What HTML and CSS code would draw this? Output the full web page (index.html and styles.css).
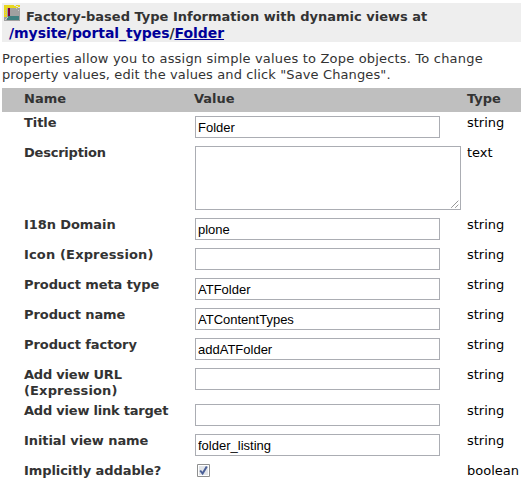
FILE: index.html
```html
<!DOCTYPE html>
<html lang="en">
<head>
<meta charset="utf-8">
<title>Properties</title>
<link rel="stylesheet" href="styles.css">
</head>
<body>
<header class="bar">
  <div class="bar-line">
    <svg class="type-icon" width="16" height="16" viewBox="0 0 16 16" shape-rendering="crispEdges">
      <path fill="#a0a0a0" d="M3 3h13v13H0v-4h3z"/>
      <path fill="#e8d820" d="M0 0h16v3H3v9H0z"/>
      <path fill="#c8c090" d="M1 5h1v1H1zM1 7h1v1H1zM1 9h1v1H1z"/>
      <path fill="#e4e4e4" d="M10 0h2v1h-2zM12 1h2v1h-2zM14 2h2v1h-2z"/>
      <path fill="#c8c8c8" d="M3 12l-2 2v1h1l2-3zM12 3h1v1h-1zM14 5h1v1h-1z"/>
      <path fill="#800040" d="M4 3h2v8H4z"/>
      <path fill="#408080" d="M4 11h11v4H3v-2h1z"/>
    </svg>
    <span class="bar-title">Factory-based Type Information with dynamic views at</span>
  </div>
  <div class="path"><a>/mysite</a>/<a>portal_types</a>/<a class="current">Folder</a></div>
</header>
<p class="help"><span class="help-a">Properties allow you to assign simple values to Zope objects. To change</span><br><span class="help-b">property values, edit the values and click "Save Changes".</span></p>
<form class="props">
  <div class="row head"><div>Name</div><div class="value">Value</div><div>Type</div></div>
  <div class="row"><label>Title</label><input class="field" type="text" value="Folder"><span>string</span></div>
  <div class="row tall"><label class="tight">Description</label><div class="area"><textarea></textarea><svg class="grip" width="8" height="8" viewBox="0 0 8 8"><path d="M0.5 7.5L7.5 0.5M4.5 7.5L7.5 4.5" stroke="#555" stroke-dasharray="1 .4"/></svg></div><span>text</span></div>
  <div class="row"><label>I18n Domain</label><input class="field" type="text" value="plone"><span>string</span></div>
  <div class="row"><label class="wide">Icon (Expression)</label><input class="field" type="text"><span>string</span></div>
  <div class="row"><label>Product meta type</label><input class="field" type="text" value="ATFolder"><span>string</span></div>
  <div class="row"><label>Product name</label><input class="field" type="text" value="ATContentTypes"><span>string</span></div>
  <div class="row"><label>Product factory</label><input class="field" type="text" value="addATFolder"><span>string</span></div>
  <div class="row double"><label class="tight">Add view URL<br><b class="wide">(Expression)</b></label><input class="field" type="text"><span>string</span></div>
  <div class="row"><label class="tight">Add view link target</label><input class="field" type="text"><span>string</span></div>
  <div class="row"><label>Initial view name</label><input class="field" type="text" value="folder_listing"><span>string</span></div>
  <div class="row last"><label>Implicitly addable?</label><div class="check"><svg width="13" height="13" viewBox="0 0 13 13"><path fill="#fff" stroke="#8e8f8f" d="M.5.5h12v12H.5z"/><path fill="#e2e5e9" d="M2 2h9v9H2z"/><path fill="none" stroke="#4a5f97" stroke-width="2" d="M3.2 6.5L5.6 9.5L9.8 2.5"/></svg></div><span>boolean</span></div>
</form>
</body>
</html>
```
FILE: styles.css
```css
* { box-sizing: border-box; }
body {
  margin: 0;
  padding: 3px 3px 0 2px;
  height: 484px;
  overflow: hidden;
  background: #fff;
  color: #333;
  font: 13px/16px Verdana, "DejaVu Sans", sans-serif;
}
.bar {
  height: 39px;
  padding: 2px 0 0 2px;
  background: #eee;
  font-weight: bold;
}
.bar-line { display: flex; gap: 6px; height: 20px; }
.type-icon { flex: none; }
.bar-title { padding-top: 4px; white-space: nowrap; }
.path { padding-left: 5px; font-size: 14px; letter-spacing: -.05px; }
.path a { color: #009; }
.current { text-decoration: underline; }
.help { margin: 9px 0 5px; height: 32px; white-space: nowrap; }
.help-a { letter-spacing: .19px; }
.help-b { letter-spacing: .12px; }
.row {
  display: grid;
  grid-template-columns: 171px 272px 1fr;
  align-items: start;
  height: 30px;
  padding: 1px 0 0 22px;
}
.head {
  height: 24px;
  margin-bottom: 2px;
  padding-top: 3px;
  background: #bfbfbf;
  font-weight: bold;
}
.value { margin-left: -1px; }
label { font-weight: bold; letter-spacing: -.08px; white-space: nowrap; }
.tight { letter-spacing: -.22px; }
.wide { letter-spacing: .15px; }
.row span { color: #000; }
.tall { height: 72px; }
.double { height: 36px; }
.last { height: 20px; }
.field, textarea {
  display: block;
  margin: 1px 0 0;
  border: 1px solid #abadb3;
  border-radius: 0;
  background: #fff;
  color: #000;
  font: 13px "Liberation Sans", Arial, sans-serif;
}
.field { width: 245px; height: 22px; padding: 1px 2px 0; }
.area { position: relative; width: 266px; height: 65px; }
textarea { width: 266px; height: 64px; resize: none; }
.grip { position: absolute; right: 2px; bottom: 2px; }
.check { padding: 0 0 0 2px; }
.check svg { display: block; margin-top: 1px; }
```
